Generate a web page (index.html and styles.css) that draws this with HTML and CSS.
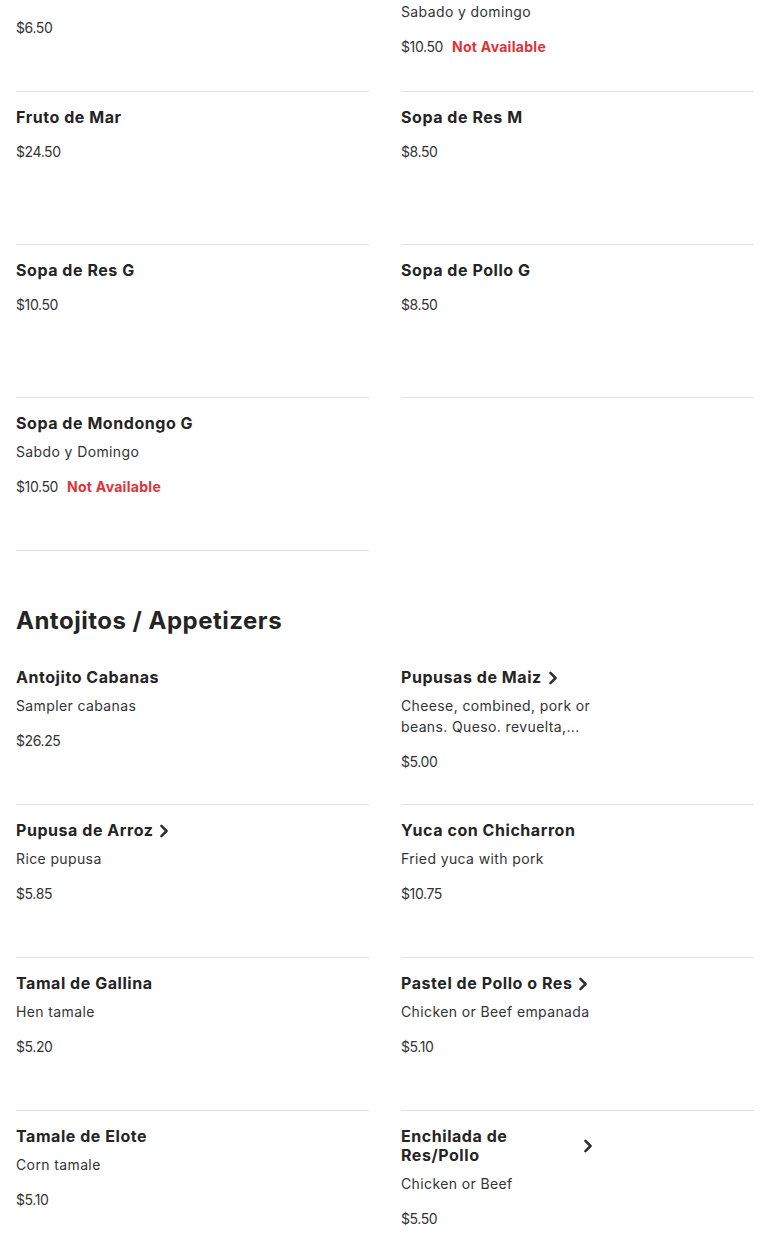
FILE: index.html
```html
<!DOCTYPE html>
<html lang="es">
<head>
<meta charset="utf-8">
<title>Menu</title>
<link rel="stylesheet" href="styles.css">
</head>
<body>
<main class="menu">
  <section class="section section-first">
    <div class="grid">
      <article class="card">
        <div class="info">
          <div class="title-row"><h3 class="title">Sopa de Pollo M</h3></div>
          <p class="desc">Sabado</p>
          <div class="price-row"><span class="price">$6.50</span></div>
        </div>
      </article>
      <article class="card">
        <div class="info">
          <div class="title-row"><h3 class="title">Sopa de Mondongo Mediana</h3></div>
          <p class="desc">Sabado y domingo</p>
          <div class="price-row"><span class="price">$10.50</span><span class="na">Not Available</span></div>
        </div>
      </article>
      <article class="card">
        <div class="info">
          <div class="title-row"><h3 class="title">Fruto de Mar</h3></div>
          <div class="price-row"><span class="price">$24.50</span></div>
        </div>
      </article>
      <article class="card">
        <div class="info">
          <div class="title-row"><h3 class="title">Sopa de Res M</h3></div>
          <div class="price-row"><span class="price">$8.50</span></div>
        </div>
      </article>
      <article class="card">
        <div class="info">
          <div class="title-row"><h3 class="title">Sopa de Res G</h3></div>
          <div class="price-row"><span class="price">$10.50</span></div>
        </div>
      </article>
      <article class="card">
        <div class="info">
          <div class="title-row"><h3 class="title">Sopa de Pollo G</h3></div>
          <div class="price-row"><span class="price">$8.50</span></div>
        </div>
      </article>
      <article class="card">
        <div class="info">
          <div class="title-row"><h3 class="title">Sopa de Mondongo G</h3></div>
          <p class="desc">Sabdo y Domingo</p>
          <div class="price-row"><span class="price">$10.50</span><span class="na">Not Available</span></div>
        </div>
      </article>
    </div>
  </section>

  <section class="section">
    <h2 class="section-title">Antojitos / Appetizers</h2>
    <div class="grid">
      <article class="card">
        <div class="info">
          <div class="title-row"><h3 class="title">Antojito Cabanas</h3></div>
          <p class="desc">Sampler cabanas</p>
          <div class="price-row"><span class="price">$26.25</span></div>
        </div>
      </article>
      <article class="card">
        <div class="info">
          <div class="title-row"><h3 class="title">Pupusas de Maiz</h3><svg class="chev" viewBox="0 0 10 14" aria-hidden="true"><path d="M2.4 1.8 L7.6 7 L2.4 12.2"/></svg></div>
          <p class="desc">Cheese, combined, pork or beans. Queso. revuelta,...</p>
          <div class="price-row"><span class="price">$5.00</span></div>
        </div>
      </article>
      <article class="card">
        <div class="info">
          <div class="title-row"><h3 class="title">Pupusa de Arroz</h3><svg class="chev" viewBox="0 0 10 14" aria-hidden="true"><path d="M2.4 1.8 L7.6 7 L2.4 12.2"/></svg></div>
          <p class="desc">Rice pupusa</p>
          <div class="price-row"><span class="price">$5.85</span></div>
        </div>
      </article>
      <article class="card">
        <div class="info">
          <div class="title-row"><h3 class="title">Yuca con Chicharron</h3></div>
          <p class="desc">Fried yuca with pork</p>
          <div class="price-row"><span class="price">$10.75</span></div>
        </div>
      </article>
      <article class="card">
        <div class="info">
          <div class="title-row"><h3 class="title">Tamal de Gallina</h3></div>
          <p class="desc">Hen tamale</p>
          <div class="price-row"><span class="price">$5.20</span></div>
        </div>
      </article>
      <article class="card">
        <div class="info">
          <div class="title-row"><h3 class="title">Pastel de Pollo o Res</h3><svg class="chev" viewBox="0 0 10 14" aria-hidden="true"><path d="M2.4 1.8 L7.6 7 L2.4 12.2"/></svg></div>
          <p class="desc">Chicken or Beef empanada</p>
          <div class="price-row"><span class="price">$5.10</span></div>
        </div>
      </article>
      <article class="card">
        <div class="info">
          <div class="title-row"><h3 class="title">Tamale de Elote</h3></div>
          <p class="desc">Corn tamale</p>
          <div class="price-row"><span class="price">$5.10</span></div>
        </div>
      </article>
      <article class="card">
        <div class="info">
          <div class="title-row"><h3 class="title">Enchilada de Res/Pollo</h3><svg class="chev" viewBox="0 0 10 14" aria-hidden="true"><path d="M2.4 1.8 L7.6 7 L2.4 12.2"/></svg></div>
          <p class="desc">Chicken or Beef</p>
          <div class="price-row"><span class="price">$5.50</span></div>
        </div>
      </article>
    </div>
  </section>
</main>
</body>
</html>
```

FILE: styles.css
```css
* {
  box-sizing: border-box;
}

html, body {
  margin: 0;
  padding: 0;
  background: #ffffff;
}

body {
  font-family: "Inter", "Open Sans", sans-serif;
  color: #2b2b2b;
  -webkit-font-smoothing: antialiased;
}

.menu {
  padding: 0 16px;
}

.section-first {
  margin-top: -61px;
}

.section + .section {
  padding-top: 55px;
}

.section-title {
  margin: 0 0 16px;
  font-size: 24px;
  line-height: 30px;
  font-weight: 700;
  color: #242424;
  letter-spacing: 0.5px;
}

.grid {
  display: grid;
  grid-template-columns: 1fr 1fr;
  column-gap: 32px;
}

.card {
  min-height: 153px;
  padding-top: 16px;
  border-bottom: 1px solid #e2e2e2;
}

.info {
  width: 192px;
  display: flex;
  flex-direction: column;
}

.title-row {
  display: flex;
  align-items: center;
  gap: 6px;
  margin-bottom: 8px;
}

.title {
  margin: 0;
  font-size: 16px;
  line-height: 19px;
  font-weight: 700;
  color: #242424;
  letter-spacing: 0.55px;
}

.chev {
  flex: none;
  width: 10px;
  height: 14px;
  fill: none;
  stroke: #2f2f2f;
  stroke-width: 2.5;
  stroke-linecap: round;
  stroke-linejoin: round;
}

.desc {
  margin: 0 0 8px;
  font-size: 14px;
  line-height: 21px;
  font-weight: 400;
  color: #333333;
  letter-spacing: 0.38px;
}

.price-row {
  margin-top: 6px;
  display: flex;
  align-items: baseline;
  gap: 9px;
  font-size: 14px;
  line-height: 21px;
}

.price {
  color: #333333;
  letter-spacing: -0.4px;
}

.na {
  color: #e0323c;
  font-weight: 700;
  letter-spacing: 0.3px;
}
```
